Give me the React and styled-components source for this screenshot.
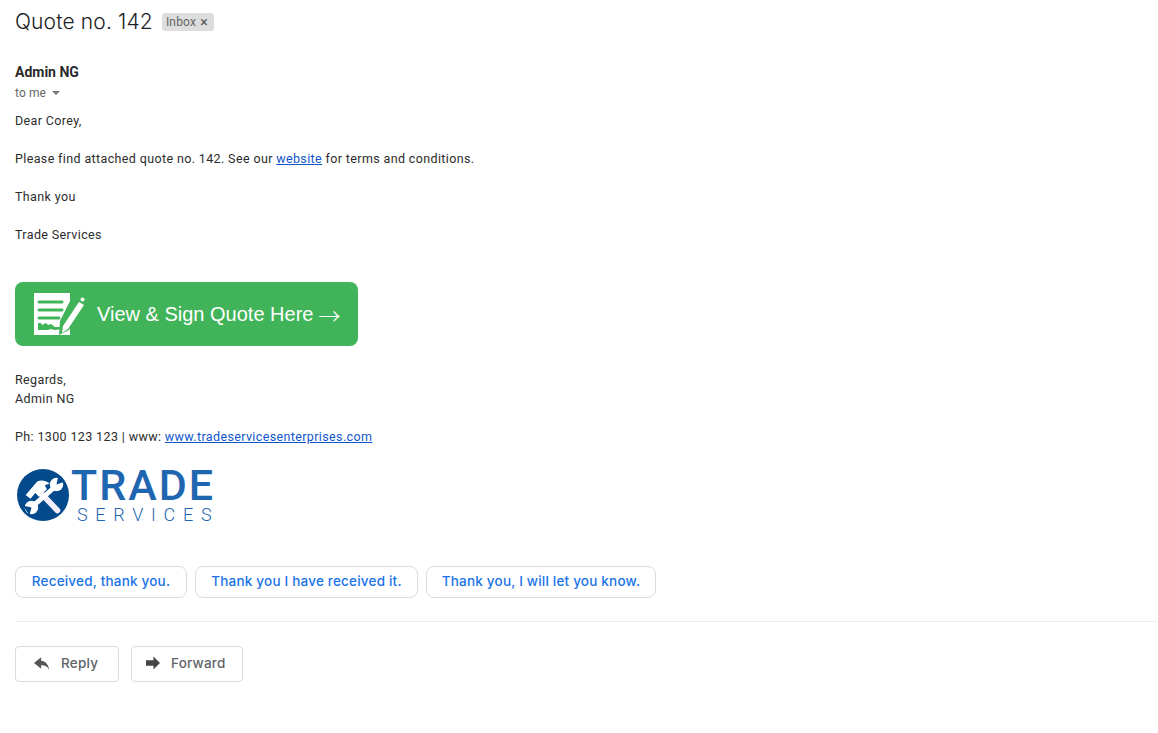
import React from 'react'
import styled, { createGlobalStyle } from 'styled-components'

const GlobalStyle = createGlobalStyle`
  html, body {
    margin: 0;
    padding: 0;
    background: #fff;
  }
`

const Page = styled.div`
  width: 1158px;
  height: 733px;
  box-sizing: border-box;
  padding: 0 0 0 15px;
  overflow: hidden;
  font-family: Roboto, "Liberation Sans", sans-serif;
  color: #222;
`

const SubjectRow = styled.div`
  display: flex;
  align-items: center;
  height: 43px;
  gap: 9px;
`

const Subject = styled.h1`
  margin: 0;
  font-family: Inter, Roboto, sans-serif;
  font-size: 21px;
  font-weight: 300;
  letter-spacing: 0.15px;
  color: #202124;
`

const Label = styled.span`
  display: inline-flex;
  align-items: center;
  gap: 4px;
  width: 52px;
  height: 18px;
  box-sizing: border-box;
  padding: 0 4px;
  border-radius: 3px;
  background: #dddddd;
  color: #666;
  font-size: 12px;
  letter-spacing: 0.2px;
`

const Close = styled.span`
  font-size: 14px;
  line-height: 14px;
  color: #555;
`

const Sender = styled.div`
  margin-top: 20px;
  height: 18px;
  line-height: 18px;
  font-size: 14px;
  font-weight: 700;
  color: #2a2a2a;
`

const ToMe = styled.div`
  display: flex;
  align-items: center;
  gap: 6px;
  height: 20px;
  margin-top: 2px;
  font-size: 12px;
  letter-spacing: 0.1px;
  color: #666;
`

const Caret = styled.span`
  width: 0;
  height: 0;
  border-left: 4px solid transparent;
  border-right: 4px solid transparent;
  border-top: 4px solid #777;
`

const Body = styled.div`
  font-size: 12.5px;
  line-height: 19px;
  letter-spacing: 0.37px;
  color: #2c2c2c;
  margin-top: 8px;
`

const Para = styled.p`
  margin: 0 0 19px;
`

const Link = styled.a`
  color: #1155cc;
  text-decoration: underline;
`

const SignButton = styled.a`
  display: flex;
  align-items: center;
  gap: 12px;
  width: 343px;
  height: 64px;
  box-sizing: border-box;
  margin: 38px 0 24px;
  padding-left: 18px;
  border-radius: 8px;
  background: #41b45a;
  color: #fff;
  font-family: "Liberation Sans", Arial, sans-serif;
  font-size: 20px;
  letter-spacing: 0;
`

const Arrow = styled.span`
  margin-left: -7px;
  font-family: "Noto Sans CJK SC", "Liberation Sans", sans-serif;
  font-size: 22px;
  font-weight: 300;
`

const Logo = styled.div`
  display: flex;
  align-items: center;
  gap: 2px;
  height: 56px;
  margin-top: 21px;
  padding-left: 2px;
`

const LogoWords = styled.div`
  display: flex;
  flex-direction: column;
  margin-top: 1px;
  color: #1f66b0;
`

const LogoTrade = styled.span`
  font-family: Roboto, sans-serif;
  font-size: 43px;
  font-weight: 500;
  line-height: 36px;
  letter-spacing: 2px;
`

const LogoServices = styled.span`
  width: 140px;
  margin: 3px 0 0 6px;
  font-family: Roboto, sans-serif;
  font-size: 18px;
  font-weight: 300;
  line-height: 18px;
  letter-spacing: 7.7px;
  white-space: nowrap;
`

const Replies = styled.div`
  display: flex;
  gap: 8px;
  margin-top: 43px;
`

const ReplyChip = styled.button`
  width: ${(p) => p.$width}px;
  height: 32px;
  box-sizing: border-box;
  padding: 0 0 2px;
  border: 1px solid #dadce0;
  border-radius: 8px;
  background: #fff;
  color: #1a73e8;
  font-family: Inter, Roboto, sans-serif;
  font-size: 13.5px;
  font-weight: 500;
  letter-spacing: 0.2px;
`

const Divider = styled.div`
  height: 1px;
  margin-top: 23px;
  background: #eeeeee;
`

const Actions = styled.div`
  display: flex;
  gap: 12px;
  margin-top: 24px;
`

const ActionButton = styled.button`
  display: flex;
  align-items: center;
  gap: 11px;
  width: ${(p) => p.$width}px;
  height: 36px;
  box-sizing: border-box;
  padding: 0 0 2px ${(p) => p.$pad}px;
  border: 1px solid #dadce0;
  border-radius: 4px;
  background: #fff;
  color: #5f6368;
  font-family: Inter, Roboto, sans-serif;
  font-size: 13.5px;
  font-weight: 500;
  letter-spacing: 0.2px;
`

function SignIcon() {
  return (
    <svg width="52" height="44" viewBox="0 0 52 44">
      <path fill="#fff" d="M1 1h36v42H1z" />
      <g stroke="#41b45a" strokeWidth="3" strokeLinecap="round">
        <path d="M6 10h23M6 18h23M6 26h20" />
      </g>
      <path fill="#41b45a" d="M5 31h3l1 2 4-2 2 2 3-1 4 3 9 0v2l-10 1-3-1-3 1H5z" />
      <path fill="#41b45a" d="M37 9l15 3-16 26-10 5 1-14z" />
      <path fill="#fff" d="M46 10l5 3-16 24-6 4 1-7z" />
      <circle cx="49.500" cy="7.500" r="2" fill="#fff" />
    </svg>
  )
}

function ToolsIcon() {
  return (
    <svg width="52" height="52" viewBox="0 0 54 54">
      <circle cx="27" cy="27" r="27" fill="#034a8c" />
      <path stroke="#f2eefa" strokeWidth="6" strokeLinecap="round" d="M23 23l19 20" />
      <path fill="#fff" d="M9 27L21 13c4-2 9-1 13 2l-5 2 2 4-8 8-4-4-5 6z" />
      <path stroke="#fff" strokeWidth="5" d="M39 19L17 38" />
      <circle cx="41" cy="16" r="7" fill="#fff" />
      <path fill="#034a8c" d="M41 16l2-9 7 6z" />
      <circle cx="15" cy="40" r="7" fill="#fff" />
      <path fill="#034a8c" d="M15 40l-9-2 7 10z" />
    </svg>
  )
}

function ReplyIcon() {
  return (
    <svg width="16" height="15" viewBox="0 0 18 16">
      <path fill="#555" d="M8 1L0 7.500 8 14v-4c4 0 7 1 9 5-.5-5-3.500-9.500-9-10z" />
    </svg>
  )
}

function ForwardIcon() {
  return (
    <svg width="14" height="14" viewBox="0 0 15 14">
      <path fill="#444" d="M8 0l7 7-7 7V10H0V4h8z" />
    </svg>
  )
}

export default function App() {
  return (
    <Page>
      <GlobalStyle />
      <SubjectRow>
        <Subject>Quote no. 142</Subject>
        <Label>
          Inbox <Close>×</Close>
        </Label>
      </SubjectRow>
      <Sender>Admin NG</Sender>
      <ToMe>
        to me <Caret />
      </ToMe>
      <Body>
        <Para>Dear Corey,</Para>
        <Para>
          Please find attached quote no. 142. See our <Link href="#">website</Link> for terms and conditions.
        </Para>
        <Para>Thank you</Para>
        <Para>Trade Services</Para>
        <SignButton>
          <SignIcon />
          View &amp; Sign Quote Here
          <Arrow>→</Arrow>
        </SignButton>
        <Para>
          Regards,
          <br />
          Admin NG
        </Para>
        <Para>
          Ph: 1300 123 123 | www: <Link href="#">www.tradeservicesenterprises.com</Link>
        </Para>
      </Body>
      <Logo>
        <ToolsIcon />
        <LogoWords>
          <LogoTrade>TRADE</LogoTrade>
          <LogoServices>SERVICES</LogoServices>
        </LogoWords>
      </Logo>
      <Replies>
        <ReplyChip $width={172}>Received, thank you.</ReplyChip>
        <ReplyChip $width={223}>Thank you I have received it.</ReplyChip>
        <ReplyChip $width={230}>Thank you, I will let you know.</ReplyChip>
      </Replies>
      <Divider />
      <Actions>
        <ActionButton $width={104} $pad={18}>
          <ReplyIcon />
          Reply
        </ActionButton>
        <ActionButton $width={112} $pad={14}>
          <ForwardIcon />
          Forward
        </ActionButton>
      </Actions>
    </Page>
  )
}
